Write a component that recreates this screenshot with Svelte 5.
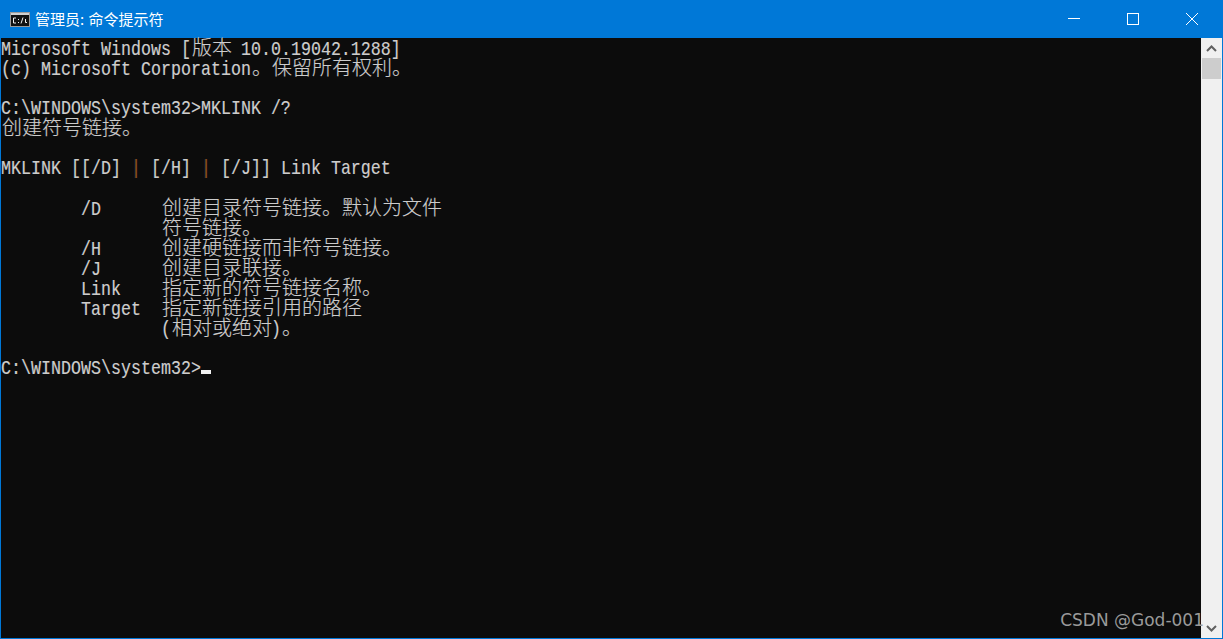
<script lang="ts">
	// console output, one entry per row
	const lines: string[] = [
		'Microsoft Windows [版本 10.0.19042.1288]',
		'(c) Microsoft Corporation。保留所有权利。',
		'',
		'C:\\WINDOWS\\system32>MKLINK /?',
		'创建符号链接。',
		'',
		'MKLINK [[/D] | [/H] | [/J]] Link Target',
		'',
		'        /D      创建目录符号链接。默认为文件',
		'                符号链接。',
		'        /H      创建硬链接而非符号链接。',
		'        /J      创建目录联接。',
		'        Link    指定新的符号链接名称。',
		'        Target  指定新链接引用的路径',
		'                (相对或绝对)。',
		''
	];
	const prompt = 'C:\\WINDOWS\\system32>';

	// the console font has half-width latin and full-width CJK cells
	function runs(line: string) {
		return (line.match(/[\u3000-\u9fff]+|\||[^\u3000-\u9fff|]+/g) ?? []).map((text) => ({
			text,
			cjk: /[\u3000-\u9fff]/.test(text),
			pipe: text === '|'
		}));
	}
</script>

{#snippet row(line: string)}
	{#each runs(line) as run}
		{#if run.cjk}
			<span class="cjk">{run.text}</span>
		{:else}
			<span class="latin" class:pipe={run.pipe}>{run.text}</span>
		{/if}
	{/each}
{/snippet}

<div class="window">
	<header class="titlebar">
		<svg class="app-icon" width="20" height="15" viewBox="0 0 20 15">
			<rect x="0.5" y="0.5" width="19" height="14" fill="#111" stroke="#9a9a9a" />
			<rect x="1" y="1" width="18" height="2" fill="#d0d0d0" />
			<path d="M6 6H3.5v5H6M8 7.5h1M8 10.5h1M13 5.5l-2 6M15.5 7v3.5M15.5 10.5h1.5" fill="none" stroke="#f0f0f0" stroke-width="1" />
		</svg>
		<span class="title">管理员: 命令提示符</span>
		<div class="controls">
			<button class="ctrl" aria-label="Minimize">
				<svg width="12" height="12" viewBox="0 0 12 12"><path d="M0 5.5h12" stroke="#fff" /></svg>
			</button>
			<button class="ctrl" aria-label="Maximize">
				<svg width="12" height="12" viewBox="0 0 12 12"><rect x="0.5" y="0.5" width="11" height="11" fill="none" stroke="#fff" /></svg>
			</button>
			<button class="ctrl" aria-label="Close">
				<svg width="12" height="12" viewBox="0 0 12 12"><path d="M0 0l12 12M12 0L0 12" stroke="#fff" /></svg>
			</button>
		</div>
	</header>

	<div class="body">
		<div class="console">
			{#each lines as line}
				<div class="row">{@render row(line)}</div>
			{/each}
			<div class="row">{@render row(prompt)}<span class="cursor"></span></div>
		</div>
		<div class="scrollbar">
			<div class="arrow">
				<svg width="11" height="7" viewBox="0 0 11 7"><path d="M1 6l4.5-4.5L10 6" fill="none" stroke="#606060" stroke-width="2" /></svg>
			</div>
			<div class="thumb"></div>
			<div class="track"></div>
			<div class="arrow">
				<svg width="11" height="7" viewBox="0 0 11 7"><path d="M1 1l4.5 4.5L10 1" fill="none" stroke="#606060" stroke-width="2" /></svg>
			</div>
		</div>
		<div class="watermark">CSDN @God-001</div>
	</div>
</div>

<style>
	:global(body) {
		margin: 0;
		overflow: hidden;
	}

	.window {
		box-sizing: border-box;
		width: 1223px;
		height: 639px;
		display: flex;
		flex-direction: column;
		border: 1px solid #0078d7;
		border-top: none;
		background: #0c0c0c;
	}

	.titlebar {
		height: 38px;
		flex: none;
		display: flex;
		align-items: center;
		background: #0078d7;
		color: #fff;
	}

	.app-icon {
		margin-left: 9px;
		margin-right: 5px;
	}

	.title {
		font-family: "Noto Sans CJK SC", "Noto Sans", sans-serif;
		font-size: 15px;
		line-height: 38px;
		word-spacing: 1px;
	}

	.controls {
		margin-left: auto;
		display: flex;
		margin-right: 1px;
	}

	.ctrl {
		width: 59px;
		height: 38px;
		padding: 0;
		border: none;
		background: none;
		display: flex;
		align-items: center;
		justify-content: center;
	}

	.body {
		position: relative;
		flex: 1;
		min-height: 0;
		display: flex;
	}

	.console {
		flex: 1;
		font-size: 20px;
		line-height: 18px;
		color: #cccccc;
	}

	.row {
		height: 20px;
		white-space: pre;
	}

	.cjk {
		font-family: "Noto Sans CJK SC", sans-serif;
		font-weight: 300;
		margin-left: 1px;
		margin-right: -1px;
		text-shadow: 0.4px 0 rgba(190, 110, 50, 0.35), -0.4px 0 rgba(70, 130, 200, 0.35);
	}

	.latin {
		display: inline-block;
		font-family: "Liberation Mono", monospace;
		font-size: 16.667px;
		transform: scaleY(1.2);
		transform-origin: 0 14px;
		text-shadow: 0.4px 0 rgba(190, 110, 50, 0.35), -0.4px 0 rgba(70, 130, 200, 0.35);
	}

	.pipe {
		color: #8a4a1c;
	}

	.cursor {
		display: inline-block;
		width: 10px;
		height: 4px;
		background: #f2f2f2;
	}

	.scrollbar {
		width: 21px;
		flex: none;
		display: flex;
		flex-direction: column;
		background: #f0f0f0;
	}

	.arrow {
		height: 20px;
		flex: none;
		display: flex;
		align-items: center;
		justify-content: center;
	}

	.thumb {
		height: 21px;
		margin: 0 1px;
		background: #cdcdcd;
	}

	.track {
		flex: 1;
	}

	.watermark {
		position: absolute;
		right: 18px;
		bottom: 6px;
		font-family: "DejaVu Sans", sans-serif;
		font-size: 17px;
		line-height: 24px;
		color: #9a9a9a;
	}
</style>
